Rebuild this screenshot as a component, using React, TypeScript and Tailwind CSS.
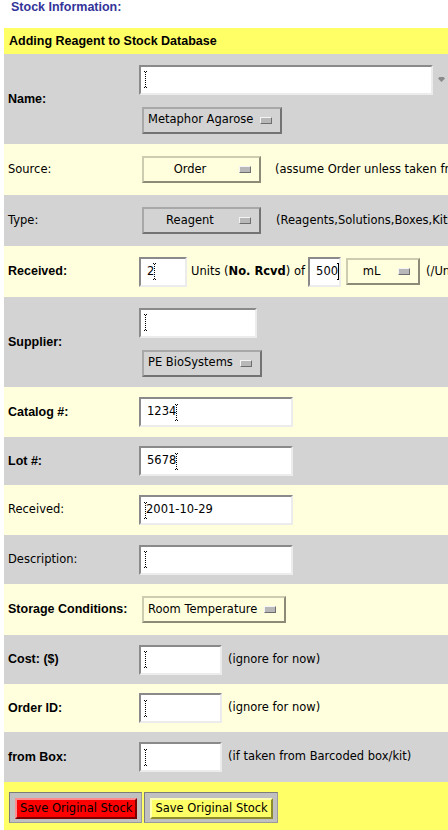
const BOLD = "font-['Liberation_Sans',Arial,sans-serif] font-bold text-[12.5px]"
const UI = "font-['DejaVu_Sans','Liberation_Sans',sans-serif] text-[11.5px]"

function Caret({ solid = false }: { solid?: boolean }) {
  const dash = solid ? undefined : '1 1'
  return (
    <svg width="5" height="17" viewBox="0 0 5 17" className="shrink-0">
      <path d="M1 0.5h3M1 16.5h3" stroke="#000" strokeDasharray={dash} />
      <path d="M2.5 1v15" stroke="#000" strokeDasharray={dash} />
    </svg>
  )
}

interface FieldProps {
  w: string
  value?: string
  caret?: 'before' | 'after' | 'solid'
}

// sunken text field, caret drawn by hand
function Field({ w, value, caret = 'before' }: FieldProps) {
  return (
    <div
      className={`${w} ${UI} h-[30px] shrink-0 bg-white border-2 border-t-[#8a8a8a] border-l-[#8a8a8a] border-b-[#ececec] border-r-[#ececec] flex items-center text-black overflow-hidden`}
    >
      {!value && <span className="pl-[2px] flex"><Caret /></span>}
      {value && caret === 'before' && (
        <span className="pl-[2px] flex items-center">
          <Caret />
          <span className="-ml-[2px]">{value}</span>
        </span>
      )}
      {value && caret !== 'before' && (
        <span className="pl-[6px] flex items-center">
          <span>{value}</span>
          <span className="-ml-[2px] flex"><Caret solid={caret === 'solid'} /></span>
        </span>
      )}
    </div>
  )
}

function Indicator() {
  return (
    <span className="w-[12px] h-[7px] shrink-0 border border-t-[#f4f4f4] border-l-[#f4f4f4] border-b-[#6e6e6e] border-r-[#6e6e6e] bg-[#b8b8b8]" />
  )
}

interface OptionProps {
  label: string
  w?: string
  center?: boolean
}

// motif style option menu button
function Option({ label, w = '', center = false }: OptionProps) {
  return (
    <div
      className={`${w} ${UI} h-[27px] ml-[3px] shrink-0 flex items-center border-2 border-t-black/20 border-l-black/20 border-b-black/45 border-r-black/45 text-black pl-[4px] pr-[8px] gap-[7px]`}
    >
      <span className={center ? 'flex-1 text-center' : ''}>{label}</span>
      <Indicator />
    </div>
  )
}

interface RowProps {
  label: string
  bold?: boolean
  gray?: boolean
  h: string
  children?: React.ReactNode
}

function Row({ label, bold = false, gray = false, h, children }: RowProps) {
  return (
    <div className={`flex items-center ${h} ${gray ? 'bg-[#d3d3d3]' : 'bg-[#ffffdd]'}`}>
      <div className={`w-[135px] shrink-0 pl-[4px] text-black ${bold ? BOLD : UI}`}>{label}</div>
      <div className="flex items-center">{children}</div>
    </div>
  )
}

function Help({ children, ml }: { children: React.ReactNode; ml: string }) {
  return <span className={`${UI} ${ml} whitespace-nowrap text-black`}>{children}</span>
}

function FooterButton({ red }: { red?: boolean }) {
  return (
    <div className="bg-[#c0c0c0] border border-t-[#7c7c7c] border-l-[#7c7c7c] border-b-[#9a9a9a] border-r-[#9a9a9a] pl-[5px] pr-[4px] pt-[5px] pb-[3px]">
      <div
        className={`${UI} h-[21px] px-[3px] flex items-center whitespace-nowrap text-black border-2 ${
          red
            ? 'bg-[#ff0000] border-t-[#ff8c8c] border-l-[#ff8c8c] border-b-[#7a0000] border-r-[#7a0000]'
            : 'bg-[#ffff66] border-t-[#ffffb4] border-l-[#ffffb4] border-b-[#8c8c2c] border-r-[#8c8c2c]'
        }`}
      >
        Save Original Stock
      </div>
    </div>
  )
}

export default function App() {
  return (
    <div className="w-[448px] h-[830px] overflow-hidden bg-white">
      <div className={`${BOLD} text-[#333399] leading-[15px] pl-[11px] h-[28px]`}>Stock Information:</div>

      <div className="ml-[4px] w-[640px]">
        {/* header */}
        <div className={`${BOLD} h-[26px] bg-[#ffff66] flex items-center pl-[5px] text-black`}>
          Adding Reagent to Stock Database
        </div>

        <Row label="Name:" bold gray h="h-[90px]">
          <div className="flex flex-col items-start">
            <div className="flex items-center gap-[5px]">
              <Field w="w-[294px]" />
              <svg width="7" height="5" viewBox="0 0 7 5">
                <path d="M0 1.5L1.5 0h4L7 1.5 3.5 5z" fill="#8a8a8a" />
              </svg>
            </div>
            <div className="mt-[12px]">
              <Option label="Metaphor Agarose" />
            </div>
          </div>
        </Row>

        <Row label="Source:" h="h-[51px]">
          <Option label="Order" w="w-[119px]" center />
          <Help ml="ml-[14px]">(assume Order unless taken from Barcoded box/kit)</Help>
        </Row>

        <Row label="Type:" gray h="h-[51px]">
          <Option label="Reagent" w="w-[119px]" center />
          <Help ml="ml-[15px]">(Reagents,Solutions,Boxes,Kits,...)</Help>
        </Row>

        <Row label="Received:" bold h="h-[51px]">
          <Field w="w-[48px]" value="2" caret="after" />
          <span className={`${UI} ml-[4px] whitespace-nowrap text-black`}>
            Units (<b className="font-bold">No. Rcvd</b>) of
          </span>
          <div className="ml-[3px] flex">
            <Field w="w-[33px]" value="500" caret="solid" />
          </div>
          <div className="ml-[2px] flex">
            <Option label="mL" w="w-[74px]" center />
          </div>
          <Help ml="ml-[6px]">(/Unit)</Help>
        </Row>

        <Row label="Supplier:" bold gray h="h-[90px]">
          <div className="flex flex-col items-start">
            <Field w="w-[118px]" />
            <div className="mt-[12px]">
              <Option label="PE BioSystems" />
            </div>
          </div>
        </Row>

        <Row label="Catalog #:" bold h="h-[50px]">
          <Field w="w-[154px]" value="1234" caret="after" />
        </Row>

        <Row label="Lot #:" bold gray h="h-[48px]">
          <Field w="w-[154px]" value="5678" caret="after" />
        </Row>

        <Row label="Received:" h="h-[50px]">
          <Field w="w-[154px]" value="2001-10-29" caret="before" />
        </Row>

        <Row label="Description:" gray h="h-[49px]">
          <Field w="w-[154px]" />
        </Row>

        <Row label="Storage Conditions:" bold h="h-[51px]">
          <Option label="Room Temperature" />
        </Row>

        <Row label="Cost: ($)" bold gray h="h-[49px]">
          <Field w="w-[83px]" />
          <Help ml="ml-[6px]">(ignore for now)</Help>
        </Row>

        <Row label="Order ID:" bold h="h-[48px]">
          <Field w="w-[83px]" />
          <Help ml="ml-[6px]">(ignore for now)</Help>
        </Row>

        <Row label="from Box:" bold gray h="h-[50px]">
          <Field w="w-[83px]" />
          <Help ml="ml-[6px]">(if taken from Barcoded box/kit)</Help>
        </Row>

        {/* footer buttons */}
        <div className="h-[60px] bg-[#ffff66] pt-[10px] pl-[5px] flex items-start gap-[2px]">
          <FooterButton red />
          <FooterButton />
        </div>
      </div>
    </div>
  )
}
